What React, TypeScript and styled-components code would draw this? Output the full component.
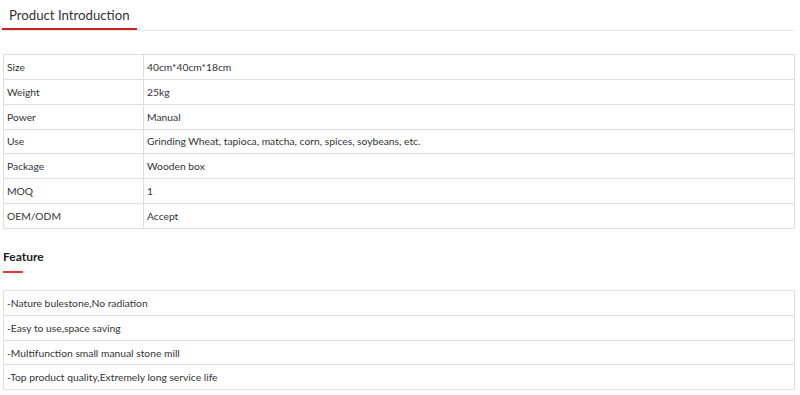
import React from 'react';
import styled, { createGlobalStyle } from 'styled-components';

const GlobalStyle = createGlobalStyle`
	body {
		margin: 0;
		background: #fff;
		font-family: Lato, "Open Sans", Arial, sans-serif;
		color: #333;
	}
`;

const Page = styled.div`
	width: 800px;
	padding: 0 5px 0 3px;
	box-sizing: border-box;
`;

const TabBar = styled.div`
	display: flex;
	border-bottom: 1px solid #e6e6e6;
	margin-left: -1px;
`;

const Tab = styled.h2`
	margin: 0;
	height: 28px;
	padding: 0 7px;
	font-size: 13.2px;
	font-weight: 400;
	line-height: 30px;
	color: #333;
	border-bottom: 2px solid #c91f1f;
`;

const SpecTable = styled.table<{ $top: number }>`
	width: 100%;
	border-collapse: collapse;
	margin-top: ${(p) => p.$top}px;
	font-size: 10.3px;
	color: #333;

	td {
		height: 22.85px;
		padding: 1px 3px 0;
		border: 1px solid #dedede;
		vertical-align: middle;
		line-height: 13px;
	}
`;

const KeyCell = styled.td`
	width: 133px;
`;

const SectionTitle = styled.h3`
	margin: 20px 0 0;
	font-size: 12px;
	font-weight: 700;
	color: #222;
	line-height: 16px;

	&::after {
		content: '';
		display: block;
		width: 20px;
		height: 2px;
		margin-top: 6px;
		background: #e53935;
	}
`;

const specs: [string, string][] = [
	['Size', '40cm*40cm*18cm'],
	['Weight', '25kg'],
	['Power', 'Manual'],
	['Use', 'Grinding Wheat, tapioca, matcha, corn, spices, soybeans, etc.'],
	['Package', 'Wooden box'],
	['MOQ', '1'],
	['OEM/ODM', 'Accept'],
];

const features = [
	'-Nature bulestone,No radiation',
	'-Easy to use,space saving',
	'-Multifunction small manual stone mill',
	'-Top product quality,Extremely long service life',
];

const App: React.FC = () => (
	<>
		<GlobalStyle />
		<Page>
			<TabBar>
				<Tab>Product Introduction</Tab>
			</TabBar>

			<SpecTable $top={23}>
				<tbody>
					{specs.map(([k, v]) => (
						<tr key={k}>
							<KeyCell>{k}</KeyCell>
							<td>{v}</td>
						</tr>
					))}
				</tbody>
			</SpecTable>

			<SectionTitle>Feature</SectionTitle>

			<SpecTable $top={17}>
				<tbody>
					{features.map((f) => (
						<tr key={f}>
							<td>{f}</td>
						</tr>
					))}
				</tbody>
			</SpecTable>
		</Page>
	</>
);

export default App;
